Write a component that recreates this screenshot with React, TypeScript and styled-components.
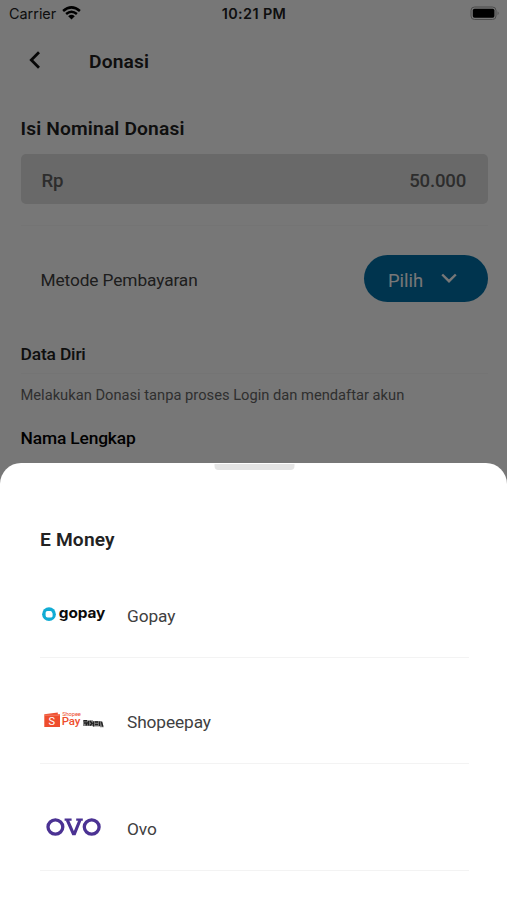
import React from "react";
import styled, { createGlobalStyle } from "styled-components";

const GlobalStyle = createGlobalStyle`
  * { box-sizing: border-box; }
  body { margin: 0; background: #fff; font-family: Roboto, "Noto Sans", sans-serif; }
`;

const Screen = styled.div`
  position: relative;
  width: 507px;
  height: 900px;
  overflow: hidden;
  background: #fff;
`;

const StatusBar = styled.header`
  display: grid;
  grid-template-columns: 1fr auto 1fr;
  align-items: center;
  height: 28px;
  padding: 0 7px 0 9px;
  font: 400 14.4px/28px Inter, sans-serif;
  color: #222;
`;

const Carrier = styled.div`
  display: flex;
  align-items: center;
  gap: 6px;

  svg { margin-top: -2px; }
`;

const Clock = styled.div`
  margin-left: -1px;
  font-weight: 600;
  letter-spacing: 0.4px;
`;

const BatteryIcon = styled.svg`
  justify-self: end;
  margin-top: -2px;
`;

const NavBar = styled.nav`
  display: flex;
  align-items: center;
  height: 68px;
  padding-left: 28px;
`;

const BackIcon = styled.svg`
  margin: -4px 47px 0 0;
`;

const Title = styled.h1`
  margin: 0;
  font-size: 19.2px;
  font-weight: 600;
  letter-spacing: 0.16px;
  line-height: 24px;
  color: #222;
`;

const Form = styled.main`
  padding: 21px 19px 0 20.5px;
`;

const AmountField = styled.div`
  display: flex;
  justify-content: space-between;
  align-items: center;
  height: 50px;
  margin-top: 13px;
  padding: 4px 22px 0 21px;
  border-radius: 5px;
  background: #e1e1e1;
  font-size: 18.6px;
  font-weight: 500;
  letter-spacing: -0.2px;
  color: #626262;
`;

const Divider = styled.hr<{ $top: number }>`
  height: 1px;
  margin: ${({ $top }) => $top}px 0 0;
  border: 0;
  background: #f9f9f9;
`;

const MethodRow = styled.div`
  display: flex;
  justify-content: space-between;
  align-items: center;
  margin-top: 29px;
  padding-left: 20px;
  font-size: 17.3px;
  letter-spacing: -0.1px;
  color: #404040;
`;

const MethodLabel = styled.span`
  padding-top: 3px;
`;

const SelectButton = styled.button`
  display: flex;
  align-items: center;
  gap: 18px;
  width: 124px;
  height: 47px;
  padding: 3px 0 0 24px;
  border: 0;
  border-radius: 24px;
  background: #0070a8;
  color: #fff;
  font: 400 18.4px Roboto, sans-serif;

  svg { margin-top: -4px; }
`;

const SectionTitle = styled.h2<{ $top: number; $color: string }>`
  margin: ${({ $top }) => $top}px 0 0;
  font-size: 17.4px;
  font-weight: 500;
  letter-spacing: -0.16px;
  line-height: 22px;
  color: ${({ $color }) => $color};
`;

const Note = styled.p`
  margin: 11px 0 0;
  font-size: 14.7px;
  line-height: 20px;
  color: #666;
`;

const Scrim = styled.div`
  position: absolute;
  inset: 0;
  background: rgba(0, 0, 0, 0.533);
`;

const Sheet = styled.section`
  position: absolute;
  inset: 463.4px 0 0;
  padding: 0 38px 0 40px;
  border-radius: 21px 21px 0 0;
  background: #fff;
`;

const Handle = styled.div`
  width: 80px;
  height: 6px;
  margin: 0.6px auto 58px;
  transform: translateX(-0.5px);
  border-radius: 0 0 4px 4px;
  background: #e5e5e5;
`;

const MethodList = styled.ul`
  margin: 0;
  padding: 0;
  list-style: none;
`;

const MethodItem = styled.li`
  display: flex;
  align-items: flex-end;
  height: 106.2px;
  padding-bottom: 26px;
  border-bottom: 1px solid #f3f3f3;
  font-size: 17.3px;
  letter-spacing: -0.1px;
  line-height: 30px;
  color: #404040;

  svg { margin-right: 20px; }
`;

const GopayLogo = () => (
  <svg width="67" height="32" viewBox="0 0 67 32">
    <circle cx="9" cy="15.2" r="6.9" fill="#12acd4" />
    <path d="M5.6 13.7Q5.6 12 7.5 12H10.4Q11.6 12 11.8 13L12.6 14.4V17Q12.6 18.4 11.2 18.4H7.6Q5.6 18.4 5.6 16.4Z" fill="#fff" />
    <text x="18.8" y="18.9" textLength="46.5" lengthAdjust="spacingAndGlyphs" fontFamily="Inter, sans-serif" fontSize="14.6" fontWeight="700" fill="#0b0b0b">gopay</text>
  </svg>
);

const ShopeepayLogo = () => (
  <svg width="67" height="32" viewBox="0 0 67 32">
    <path d="M4.3 9.2L17.8 7.4V9.3H20V22H4.3Z" fill="#ee4d2d" />
    <path d="M4.5 10.2H19.5" stroke="#f9a08a" strokeWidth=".6" />
    <text x="8.6" y="20" fontFamily="Roboto, sans-serif" fontSize="11" fill="#fff">S</text>
    <text x="22.2" y="10.6" textLength="18.6" lengthAdjust="spacingAndGlyphs" fontFamily="Roboto, sans-serif" fontSize="5" fill="#ee4d2d">Shopee</text>
    <text x="21.7" y="20" textLength="18.6" lengthAdjust="spacingAndGlyphs" fontFamily="Roboto, sans-serif" fontSize="10.4" fontWeight="500" fill="#ee4d2d">Pay</text>
    <path d="M43 15.2H53V16H62L63.8 22.3H60V21.5H53V20.9H43Z" fill="#888" />
    <path d="M43.5 15.7H47M44 18H47L46 20.5M48.5 16V20.5M50 16L52 18.5L50 20.5M53.5 16.5V21.5M55 17H58M55 19.5H58M59.5 16.5V21M61.5 17L62.7 21.5" stroke="#222" strokeWidth="1.4" fill="none" />
  </svg>
);

const OvoLogo = () => (
  <svg width="67" height="32" viewBox="0 0 67 32" fill="none" stroke="#4b3293">
    <ellipse cx="15.4" cy="15" rx="7.4" ry="7.1" strokeWidth="3.3" />
    <ellipse cx="51.7" cy="15" rx="7.4" ry="7.1" strokeWidth="3.3" />
    <path d="M27.3 8L33.3 21.6H34.5L40 8" strokeWidth="3.1" />
    <path d="M24.6 7.7H31.6M36.2 7.7H42.8" strokeWidth="2.2" />
  </svg>
);

const methods = [
  { name: "Gopay", Logo: GopayLogo },
  { name: "Shopeepay", Logo: ShopeepayLogo },
  { name: "Ovo", Logo: OvoLogo },
];

export default function App() {
  return (
    <Screen>
      <GlobalStyle />
      <StatusBar>
        <Carrier>
          Carrier
          <svg width="19" height="14" viewBox="0 0 19 14" fill="none" stroke="#000" strokeWidth="2.5">
            <path d="M1.1 5Q9.5-2.3 17.9 5M4.1 8Q9.5 3.4 14.9 8" />
            <path d="M6.2 10.2Q9.5 7.5 12.8 10.2L9.5 13.5Z" fill="#000" stroke="none" />
          </svg>
        </Carrier>
        <Clock>10:21 PM</Clock>
        <BatteryIcon width="30" height="15" viewBox="0 0 30 15">
          <rect x="1" y="1" width="25" height="12.5" rx="3.5" fill="none" stroke="#a0a0a0" />
          <rect x="2.8" y="2.8" width="21.6" height="9" rx="1.7" fill="#000" />
          <path d="M27.6 5.2Q29.6 7.2 27.6 9.2Z" fill="#a0a0a0" />
        </BatteryIcon>
      </StatusBar>
      <NavBar>
        <BackIcon width="14" height="20" viewBox="0 0 14 20" fill="none" stroke="#111" strokeWidth="2.8">
          <path d="M11 2.3L3.3 10L11 17.7" />
        </BackIcon>
        <Title>Donasi</Title>
      </NavBar>
      <Form>
        <Title>Isi Nominal Donasi</Title>
        <AmountField>
          <span>Rp</span>
          <span>50.000</span>
        </AmountField>
        <Divider $top={21} />
        <MethodRow>
          <MethodLabel>Metode Pembayaran</MethodLabel>
          <SelectButton>
            Pilih
            <svg width="16" height="11" viewBox="0 0 16 11" fill="none" stroke="#fff" strokeWidth="2.4">
              <path d="M1.2 1.5L8 8.2L14.8 1.5" />
            </svg>
          </SelectButton>
        </MethodRow>
        <SectionTitle $top={41} $color="#222">Data Diri</SectionTitle>
        <Divider $top={8} />
        <Note>Melakukan Donasi tanpa proses Login dan mendaftar akun</Note>
        <SectionTitle $top={22} $color="#000">Nama Lengkap</SectionTitle>
      </Form>
      <Scrim />
      <Sheet>
        <Handle />
        <Title>E Money</Title>
        <MethodList>
          {methods.map(({ name, Logo }) => (
            <MethodItem key={name}>
              <Logo />
              {name}
            </MethodItem>
          ))}
        </MethodList>
      </Sheet>
    </Screen>
  );
}
